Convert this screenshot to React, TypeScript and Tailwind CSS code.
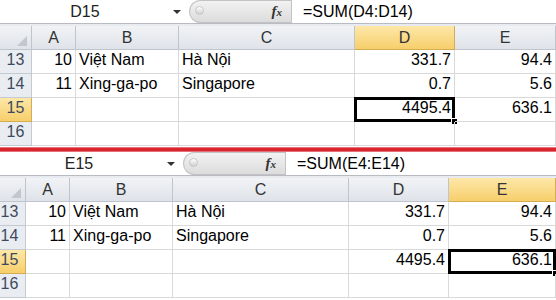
import React from 'react';

const font = { fontFamily: '"Liberation Sans", Arial, sans-serif' };

type Cell = { text?: string; align?: 'left' | 'right' };
type Row = { num: string; cells: Cell[] };

const topCols = [
  { label: 'A', w: 'w-[44px]' },
  { label: 'B', w: 'w-[103px]' },
  { label: 'C', w: 'w-[176px]' },
  { label: 'D', w: 'w-[100px]' },
  { label: 'E', w: 'w-[101px]' },
];

const bottomCols = [
  { label: 'A', w: 'w-[44px]' },
  { label: 'B', w: 'w-[103px]' },
  { label: 'C', w: 'w-[176px]' },
  { label: 'D', w: 'w-[100px]' },
  { label: 'E', w: 'w-[107px]' },
];

const rows: Row[] = [
  {
    num: '13',
    cells: [
      { text: '10', align: 'right' },
      { text: 'Việt Nam' },
      { text: 'Hà Nội' },
      { text: '331.7', align: 'right' },
      { text: '94.4', align: 'right' },
    ],
  },
  {
    num: '14',
    cells: [
      { text: '11', align: 'right' },
      { text: 'Xing-ga-po' },
      { text: 'Singapore' },
      { text: '0.7', align: 'right' },
      { text: '5.6', align: 'right' },
    ],
  },
  {
    num: '15',
    cells: [{}, {}, {}, { text: '4495.4', align: 'right' }, { text: '636.1', align: 'right' }],
  },
  { num: '16', cells: [{}, {}, {}, {}, {}] },
];

function FormulaBar({ name, formula }: { name: string; formula: string }) {
  return (
    <div className="flex h-[24px] bg-white border-b border-[#b8bcc2]">
      <div className="w-[170px] shrink-0 flex items-center justify-center text-[16px] text-[#222] pt-[1px]">{name}</div>
      <div className="w-[19px] shrink-0 flex items-center justify-start pl-[3px]">
        <div className="w-0 h-0 border-l-[4px] border-r-[4px] border-t-[4px] border-l-transparent border-r-transparent border-t-[#333]" />
      </div>
      <div className="relative w-[102px] shrink-0 h-[23px] rounded-l-full bg-gradient-to-b from-[#f2f2f2] to-[#dcdcdc] border border-[#c3c3c3] border-r-0 flex items-center justify-end pr-[9px]">
        <div className="absolute left-[5px] top-[5px] w-[9px] h-[9px] rounded-full bg-gradient-to-b from-[#ffffff] to-[#cfcfcf] border border-[#c7c7c7]" />
        <span className="italic font-bold text-[15px] text-[#333]" style={{ fontFamily: '"Liberation Serif", serif' }}>
          f<span className="text-[11px]">x</span>
        </span>
      </div>
      <div className="w-[1px] shrink-0 bg-[#c3c3c3]" />
      <div className="flex-1 flex items-center pl-[11px] text-[16px] text-black pt-[1px] whitespace-nowrap">{formula}</div>
    </div>
  );
}

function Sheet({
  name,
  formula,
  sel,
  cols,
}: {
  name: string;
  formula: string;
  sel: number;
  cols: { label: string; w: string }[];
}) {
  return (
    <div className="flex flex-col w-max">
      <FormulaBar name={name} formula={formula} />
      <div className="h-[2px] bg-[#e8ebef]" />
      {/* column headers */}
      <div className="flex h-[24px]">
        <div className="relative w-[32px] shrink-0 bg-gradient-to-b from-[#f1f3f6] to-[#dfe3e9] border-r border-b border-[#bfc5cd]">
          <div className="absolute right-[4px] bottom-[3px] w-0 h-0 border-b-[10px] border-l-[10px] border-b-[#c2c7ce] border-l-transparent" />
        </div>
        {cols.map((c, i) => (
          <div
            key={c.label}
            className={`${c.w} shrink-0 flex items-center justify-center text-[16px] text-[#333] border-r border-b pt-[1px] ${
              i === sel
                ? 'bg-gradient-to-b from-[#fde7a8] to-[#f7cf6a] border-[#d4ac55]'
                : 'bg-gradient-to-b from-[#f1f3f6] to-[#dfe3e9] border-[#bfc5cd]'
            }`}
          >
            {c.label}
          </div>
        ))}
      </div>
      {rows.map((r) => (
        <div key={r.num} className="flex h-[24px]">
          <div
            className={`w-[32px] shrink-0 flex items-end justify-center pb-[1px] text-[16px] text-[#3d4a5e] border-r border-b ${
              r.num === '15' ? 'bg-gradient-to-b from-[#fde7a8] to-[#f7cf6a] border-[#d4ac55]' : 'bg-[#e9edf2] border-[#c4cad2]'
            }`}
          >
            {r.num}
          </div>
          {r.cells.map((cell, i) => {
            const active = r.num === '15' && i === sel;
            return (
              <div
                key={i}
                className={`${cols[i].w} shrink-0 relative flex items-end pb-[1px] text-[16px] text-black border-r border-b border-[#d9d9d9] ${
                  cell.align === 'right' ? 'justify-end pr-[3px]' : 'justify-start pl-[3px]'
                }`}
              >
                {cell.text}
                {active && (
                  <>
                    <div className="absolute -left-[1px] -top-[1px] -right-[1px] -bottom-[1px] border-[3px] border-black" />
                    <div className="absolute -right-[4px] -bottom-[4px] w-[7px] h-[7px] bg-black border border-white" />
                  </>
                )}
              </div>
            );
          })}
        </div>
      ))}
    </div>
  );
}

export default function App() {
  return (
    <div className="relative w-[556px] h-[300px] overflow-hidden bg-white flex flex-col" style={font}>
      <div className="h-[147px] shrink-0 overflow-hidden">
        <Sheet name="D15" formula="=SUM(D4:D14)" sel={3} cols={topCols} />
      </div>
      <div className="h-[5px] shrink-0 bg-[#d9262e] border-y border-[#e8707a]" />
      <div className="flex-1 overflow-hidden -ml-[6px]">
        <Sheet name="E15" formula="=SUM(E4:E14)" sel={4} cols={bottomCols} />
      </div>
    </div>
  );
}
